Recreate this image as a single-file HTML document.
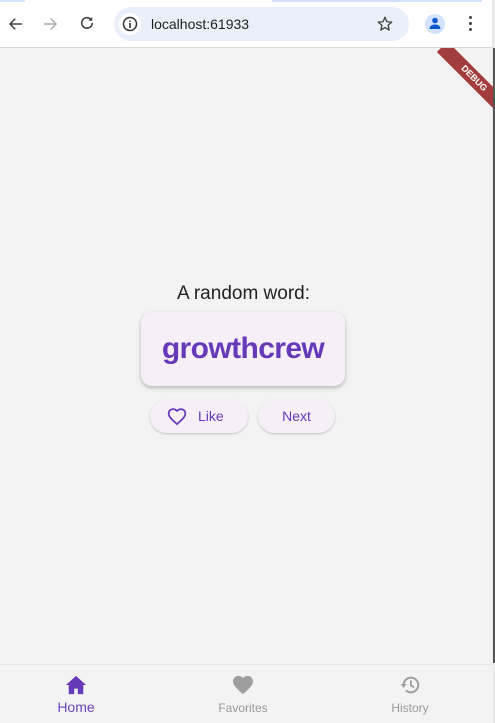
<!DOCTYPE html>
<html><head><style>
*{margin:0;padding:0;box-sizing:border-box}
body{width:495px;height:723px;overflow:hidden;background:#f3f3f3;font-family:"Liberation Sans",sans-serif;position:relative}
.top{position:absolute;left:0;top:0;width:495px;height:48px;background:#fff;border-bottom:1px solid #d9d9d9}
.tabline{position:absolute;top:0;height:2px;background:#d3e3fd}
.url{position:absolute;left:114px;top:7px;width:295px;height:34px;border-radius:17px;background:#eaf0f9}
.abs{position:absolute}
.card{position:absolute;left:141px;top:312px;width:204px;height:74px;border-radius:11px;background:#f6eff8;box-shadow:0 2px 4px rgba(0,0,0,.25);color:#6539b8;font-size:30px;font-weight:bold;text-align:center;line-height:74px;letter-spacing:-0.6px}
.btn{position:absolute;top:400px;height:33px;border-radius:17px;background:#f6eff8;box-shadow:0 1px 2px rgba(0,0,0,.2);color:#6539b8;font-size:14px;line-height:33px}
.nav{position:absolute;left:0;top:664px;width:493px;height:59px;border-top:1px solid #e6e6e6;background:#f3f3f3}
.lbl{position:absolute;font-size:12px;color:#9a9a9a;text-align:center;width:100px}
</style></head><body>
<div class="top">
<div class="tabline" style="left:0;width:25px"></div>
<div class="tabline" style="left:272px;width:210px"></div>
<svg class="abs" style="left:7px;top:15px" width="18" height="18" viewBox="0 0 24 24"><path d="M20 12H5M11 5l-7 7 7 7" fill="none" stroke="#444" stroke-width="2"/></svg>
<svg class="abs" style="left:41px;top:15px" width="18" height="18" viewBox="0 0 24 24"><path d="M4 12h15M13 5l7 7-7 7" fill="none" stroke="#aaa" stroke-width="2"/></svg>
<svg class="abs" style="left:78px;top:14px" width="18" height="18" viewBox="0 0 24 24"><path d="M19 12a7 7 0 1 1-2-5" fill="none" stroke="#444" stroke-width="2.2"/><path d="M19 4v5h-5z" fill="#444"/></svg>
<div class="url"></div>
<div class="abs" style="left:119px;top:13px;width:22px;height:22px;border-radius:50%;background:#fff"></div>
<svg class="abs" style="left:122px;top:16px" width="16" height="16" viewBox="0 0 16 16"><circle cx="8" cy="8" r="6.5" fill="none" stroke="#333" stroke-width="1.5"/><path d="M8 7v5M8 4.5v1.2" stroke="#333" stroke-width="1.6"/></svg>
<div class="abs" style="left:151px;top:16px;font-size:14px;color:#222">localhost:61933</div>
<svg class="abs" style="left:376px;top:15px" width="18" height="18" viewBox="0 0 24 24"><path d="M12 3l2.6 6 6.4.5-4.9 4.2 1.5 6.3L12 16.7 6.4 20l1.5-6.3L3 9.5 9.4 9z" fill="none" stroke="#444" stroke-width="1.8" stroke-linejoin="round"/></svg>
<div class="abs" style="left:425px;top:14px;width:20px;height:20px;border-radius:50%;background:#d3e3fd"></div>
<svg class="abs" style="left:428px;top:16px" width="14" height="14" viewBox="0 0 14 14"><circle cx="7" cy="4.5" r="2.8" fill="#0b57d0"/><path d="M1.5 13c0-3 2.5-4.5 5.5-4.5s5.5 1.5 5.5 4.5z" fill="#0b57d0"/></svg>
<div class="abs" style="left:469px;top:16px;width:3px;height:3px;border-radius:50%;background:#444;box-shadow:0 6px 0 #444,0 12px 0 #444"></div>
</div>
<div class="abs" style="left:492px;top:0;width:3px;height:723px;background:#e8e8e8"></div>
<div class="abs" style="left:493px;top:48px;width:2px;height:615px;background:#555"></div>
<div class="abs" style="left:420px;top:48px;width:73px;height:73px;overflow:hidden">
<div style="position:absolute;left:9px;top:23px;width:90px;height:15px;background:#a33c3c;transform:rotate(45deg);color:#fff;font-size:9px;font-weight:bold;text-align:center;line-height:15px">DEBUG</div>
</div>
<div class="abs" style="left:0;width:487px;top:283px;text-align:center;font-size:19px;color:#222">A random word:</div>
<div class="card">growthcrew</div>
<div class="btn" style="left:150px;width:98px"><svg class="abs" style="left:17px;top:7px" width="20" height="20" viewBox="0 0 24 24"><path d="M12 20.5l-1.5-1.3C5.3 14.5 2 11.5 2 7.8 2 4.8 4.3 2.5 7.3 2.5c1.7 0 3.3.8 4.7 2.1 1.4-1.3 3-2.1 4.7-2.1 3 0 5.3 2.3 5.3 5.3 0 3.7-3.3 6.7-8.5 11.4z" fill="none" stroke="#6539b8" stroke-width="2.1"/></svg><span class="abs" style="left:48px">Like</span></div>
<div class="btn" style="left:258px;width:77px;text-align:center">Next</div>
<div class="nav">
<svg class="abs" style="left:65px;top:10px" width="22" height="20" viewBox="0 0 24 22"><path d="M12 1L1 11h3v10h6v-6h4v6h6V11h3z" fill="#6539b8"/></svg>
<div class="lbl" style="left:26px;top:34px;font-size:14px;color:#6e45c0">Home</div>
<svg class="abs" style="left:232px;top:10px" width="22" height="20" viewBox="0 0 24 22"><path d="M12 21l-1.6-1.4C4.8 14.5 1 11.1 1 7 1 3.6 3.6 1 7 1c1.9 0 3.7.9 5 2.3C13.3 1.9 15.1 1 17 1c3.4 0 6 2.6 6 6 0 4.1-3.8 7.5-9.4 12.6z" fill="#9e9e9e"/></svg>
<div class="lbl" style="left:193px;top:36px">Favorites</div>
<svg class="abs" style="left:399px;top:9px" width="22" height="22" viewBox="0 0 24 24"><path d="M5 12a8 8 0 1 1 2.5 5.8" fill="none" stroke="#9e9e9e" stroke-width="2.2"/><path d="M1.5 11h7l-3.5 4z" fill="#9e9e9e"/><path d="M13 7v5.5l3.5 2" fill="none" stroke="#9e9e9e" stroke-width="2"/></svg>
<div class="lbl" style="left:360px;top:36px">History</div>
</div>
</body></html>
